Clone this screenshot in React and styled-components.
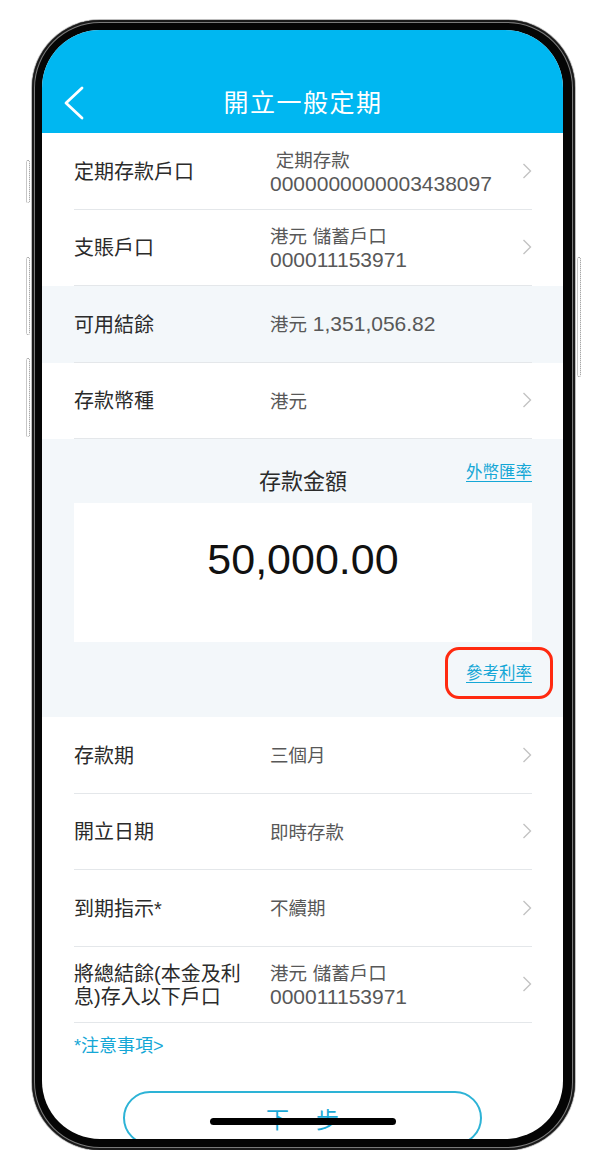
import React from "react";
import styled, { createGlobalStyle } from "styled-components";

const GlobalStyle = createGlobalStyle`
  * { box-sizing: border-box; }
  body {
    margin: 0;
    background: #fff;
    font-family: "Liberation Sans", "Noto Sans CJK TC", sans-serif;
  }
`;

const topRows = [
  { label: "定期存款戶口", value: ["\u00a0定期存款", "0000000000003438097"] },
  { label: "支賬戶口", value: ["港元 儲蓄戶口", "000011153971"] },
  { label: "可用結餘", value: ["港元 1,351,056.82"], muted: true, noArrow: true },
  { label: "存款幣種", value: ["港元"] },
];

const bottomRows = [
  { label: "存款期", value: ["三個月"] },
  { label: "開立日期", value: ["即時存款"] },
  { label: "到期指示*", value: ["不續期"] },
  { label: "將總結餘(本金及利息)存入以下戶口", value: ["港元 儲蓄戶口", "000011153971"] },
];

// CJK glyphs sit a bit smaller than the digits in the values
const CJK_RUN = /([\u3000-\u9fff\uff00-\uffef]+)/;
const renderRuns = (text) =>
  text.split(CJK_RUN).map((part, i) =>
    CJK_RUN.test(part) ? <Cjk key={i}>{part}</Cjk> : part
  );

const BackIcon = () => (
  <svg width="22" height="34" viewBox="0 0 22 34">
    <path d="M19 2 L3 17 L19 32" fill="none" stroke="#fff" strokeWidth="2.8" strokeLinecap="round" strokeLinejoin="round" />
  </svg>
);

const ArrowIcon = () => (
  <svg width="10" height="16" viewBox="0 0 10 16">
    <path d="M1.5 1 L8.5 8 L1.5 15" fill="none" stroke="#c3c3c3" strokeWidth="1.4" />
  </svg>
);

const FormRow = ({ label, value, muted, noArrow }) => (
  <Row muted={muted}>
    <RowInner>
      <Label>{label}</Label>
      <Value>
        {value.map((line) => (
          <div key={line}>{renderRuns(line)}</div>
        ))}
      </Value>
      <Arrow>{!noArrow && <ArrowIcon />}</Arrow>
    </RowInner>
  </Row>
);

const App = () => {
  return (
    <>
      <GlobalStyle />
      <Page>
        <Frame>
          <SideButton side="left" top={140} size={43} />
          <SideButton side="left" top={237} size={78} />
          <SideButton side="left" top={338} size={79} />
          <SideButton side="right" top={237} size={120} />
          <Screen>
            <Header>
              <BackButton type="button"><BackIcon /></BackButton>
              <Title>開立一般定期</Title>
              <span />
            </Header>

            {topRows.map((r) => (
              <FormRow key={r.label} {...r} />
            ))}

            <AmountSection>
              <AmountHead>
                <span />
                <AmountTitle>存款金額</AmountTitle>
                <FxLink>外幣匯率</FxLink>
              </AmountHead>
              <AmountBox>50,000.00</AmountBox>
              <RateRow>
                <RateHighlight>
                  <TextLink>參考利率</TextLink>
                </RateHighlight>
              </RateRow>
            </AmountSection>

            {bottomRows.map((r) => (
              <FormRow key={r.label} {...r} />
            ))}

            <Notice>*注意事項&gt;</Notice>
            <NextButton type="button">下一步</NextButton>
            <HomeBar />
          </Screen>
        </Frame>
      </Page>
    </>
  );
};

export default App;

const Page = styled.div`
  padding: 20px 0 0 32px;
`;

const Frame = styled.div`
  position: relative;
  width: 543px;
  height: 1130px;
  padding: 10px 12px 11px 10px;
  border-radius: 68px;
  background: #050505;
  box-shadow: inset 0 0 0 2px #1a1a1a, inset 0 0 0 3px #7a7a7a, 0 0 0 1px #bdbdbd;
`;

const SideButton = styled.div`
  position: absolute;
  top: ${(p) => p.top}px;
  ${(p) => (p.side === "left" ? "left: -6px;" : "right: -6px;")}
  width: 4px;
  height: ${(p) => p.size}px;
  border: 1px dotted #8d8d8d;
  border-radius: 2px;
`;

const Screen = styled.div`
  position: relative;
  width: 521px;
  height: 1109px;
  border-radius: 58px;
  overflow: hidden;
  background: #fff;
  display: flex;
  flex-direction: column;
`;

const Header = styled.div`
  flex: none;
  height: 103px;
  padding: 45px 20px 0 21px;
  background: #00b7f1;
  display: grid;
  grid-template-columns: 1fr auto 1fr;
  align-items: center;
  align-content: start;
`;

const BackButton = styled.button`
  justify-self: start;
  display: flex;
  align-items: center;
  height: 56px;
  padding: 0;
  background: none;
  border: none;
  cursor: pointer;
`;

const Title = styled.h1`
  margin: 0;
  color: #fff;
  font-size: 25px;
  font-weight: 400;
  letter-spacing: 1.5px;
  line-height: 56px;
`;

const Row = styled.div`
  flex: none;
  padding: 0 31px 0 32px;
  background: ${(p) => (p.muted ? "#f3f7fa" : "#fff")};
`;

const RowInner = styled.div`
  height: 76.5px;
  display: flex;
  align-items: center;
  border-bottom: 1px solid #e4e7ea;
`;

const Label = styled.div`
  flex: 0 0 196px;
  padding: 3px 14px 0 0;
  color: #2b2b2b;
  font-size: 20px;
  line-height: 23px;
`;

const Value = styled.div`
  flex: 1;
  padding-top: 1px;
  color: #585858;
  font-size: 21px;
  line-height: 23px;
  white-space: nowrap;
`;

const Cjk = styled.span`
  font-size: 18.5px;
`;

const Arrow = styled.div`
  flex: none;
  width: 10px;
  display: flex;
  justify-content: flex-end;
`;

const AmountSection = styled.div`
  flex: none;
  padding: 28px 31px 18px 32px;
  background: #f3f7fa;
`;

const AmountHead = styled.div`
  display: grid;
  grid-template-columns: 1fr auto 1fr;
`;

const AmountTitle = styled.div`
  color: #2b2b2b;
  font-size: 22px;
  line-height: 30px;
`;

const TextLink = styled.a`
  color: #15a7d6;
  font-size: 16.5px;
  line-height: 22px;
  text-decoration: underline;
  text-underline-offset: 3px;
  cursor: pointer;
`;

const FxLink = styled(TextLink)`
  justify-self: end;
  align-self: start;
  margin-top: -6px;
`;

const AmountBox = styled.div`
  margin-top: 6px;
  height: 139px;
  padding-top: 31px;
  background: #fff;
  text-align: center;
  color: #111;
  font-size: 43px;
  line-height: 50px;
`;

const RateRow = styled.div`
  display: flex;
  justify-content: flex-end;
  margin-top: 5px;
  margin-right: -21px;
`;

const RateHighlight = styled.div`
  display: flex;
  padding: 12px 18px;
  border: 3px solid #ff2a10;
  border-radius: 14px;
`;

const Notice = styled.a`
  padding: 11px 32px 0;
  color: #15a7d6;
  font-size: 18px;
  line-height: 24px;
`;

const NextButton = styled.button`
  flex: none;
  align-self: center;
  margin-top: 33px;
  width: 359px;
  height: 54px;
  border: 2px solid #2db3d6;
  border-radius: 27px;
  background: #fff;
  color: #1aa9d6;
  font-family: inherit;
  font-size: 23px;
  letter-spacing: 2px;
  text-indent: 2px;
  cursor: pointer;
`;

const HomeBar = styled.div`
  position: absolute;
  left: 168px;
  bottom: 14px;
  width: 186px;
  height: 7px;
  border-radius: 4px;
  background: #000;
`;
